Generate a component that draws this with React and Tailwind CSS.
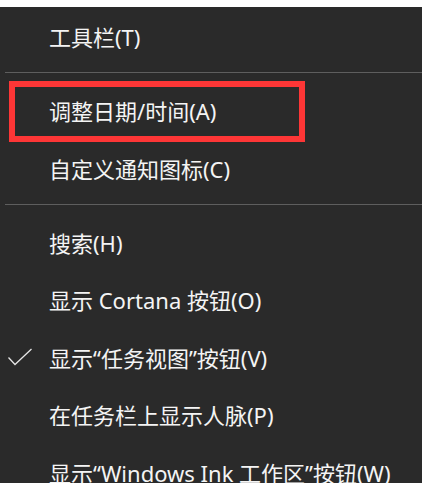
import React from "react";

const groups = [
  [{ label: "工具栏(T)" }],
  [{ label: "调整日期/时间(A)", marked: true }, { label: "自定义通知图标(C)" }],
  [
    { label: "搜索(H)" },
    { label: "显示 Cortana 按钮(O)" },
    { label: "显示“任务视图”按钮(V)", checked: true },
    { label: "在任务栏上显示人脉(P)" },
    { label: "显示“Windows Ink 工作区”按钮(W)" },
  ],
];

function Check() {
  return (
    <svg width="26" height="20" viewBox="0 0 26 20" className="absolute left-[7px] top-1/2 -translate-y-1/2">
      <path d="M1.5 9.5 L8 16.5 L24.5 1" fill="none" stroke="#e6e6e6" strokeWidth="1.3" />
    </svg>
  );
}

function Item({ label, checked, marked }) {
  return (
    <div className="relative flex h-[57.5px] items-center pl-[49px]">
      {marked ? (
        <div className="absolute left-[9px] top-[-2px] h-[61px] w-[296px] border-[6px] border-[#fd3636]" />
      ) : null}
      {checked ? <Check /> : null}
      <span className="relative whitespace-nowrap text-[22px] leading-none text-[#f4f4f4]">{label}</span>
    </div>
  );
}

export default function App() {
  return (
    <div
      className="h-[483px] w-[422px] overflow-hidden bg-white pt-[7px]"
      style={{ fontFamily: '"Noto Sans", "Noto Sans CJK SC", sans-serif' }}
    >
      <div className="h-full bg-[#2a2a2a] pt-[1.5px]">
        {groups.map((group, gi) => (
          <div key={gi}>
            {gi > 0 ? <div className="ml-[5px] mt-[6px] mb-[9.5px] h-px bg-[#5e5e5e]" /> : null}
            {group.map((item) => (
              <Item key={item.label} {...item} />
            ))}
          </div>
        ))}
      </div>
    </div>
  );
}
